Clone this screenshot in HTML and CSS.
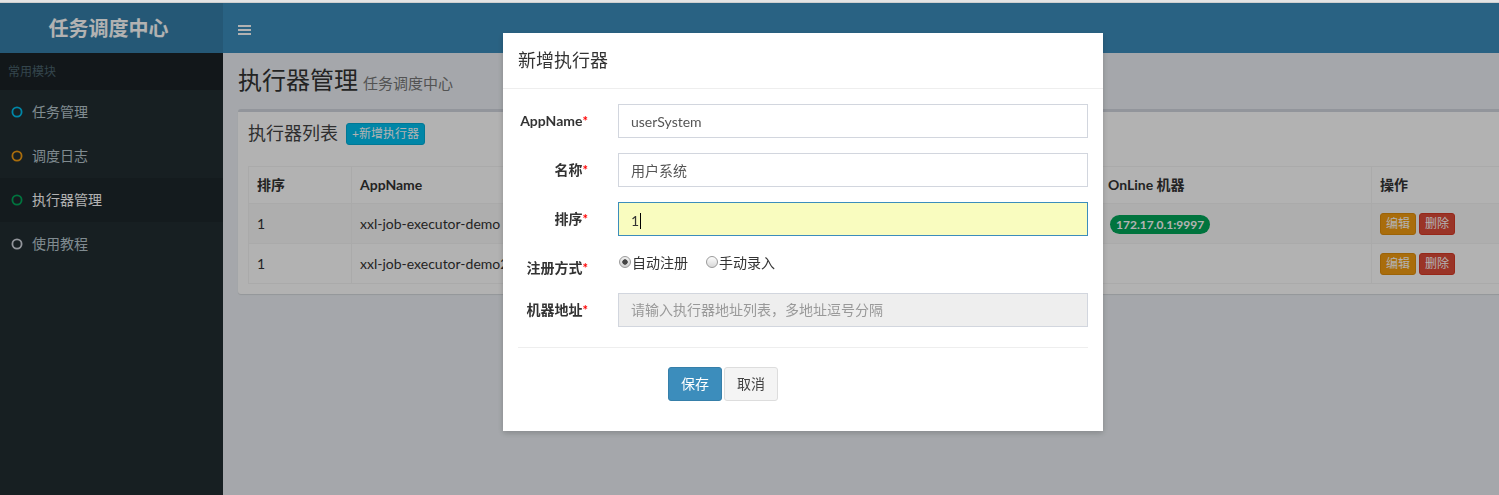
FILE: index.html
```html
<!DOCTYPE html>
<html lang="zh-CN">
<head>
<meta charset="utf-8">
<title>执行器管理</title>
<link rel="stylesheet" href="styles.css">
</head>
<body>
<div class="topline"></div>
<div class="wrapper">
  <header class="main-header">
    <div class="logo">任务调度中心</div>
    <nav class="navbar">
      <span class="toggle"><i></i><i></i><i></i></span>
    </nav>
  </header>
  <div class="layout">
    <aside class="sidebar">
      <div class="menu-header">常用模块</div>
      <ul class="menu">
        <li><svg class="ico" viewBox="0 0 12 12"><circle cx="6" cy="6" r="4.6" stroke="#00c0ef"/></svg>任务管理</li>
        <li><svg class="ico" viewBox="0 0 12 12"><circle cx="6" cy="6" r="4.6" stroke="#f39c12"/></svg>调度日志</li>
        <li class="active"><svg class="ico" viewBox="0 0 12 12"><circle cx="6" cy="6" r="4.6" stroke="#00a65a"/></svg>执行器管理</li>
        <li><svg class="ico" viewBox="0 0 12 12"><circle cx="6" cy="6" r="4.6" stroke="#d2d6de"/></svg>使用教程</li>
      </ul>
    </aside>
    <main class="content-wrapper">
      <section class="content-header">
        <h1>执行器管理<small>任务调度中心</small></h1>
      </section>
      <section class="content">
        <div class="box">
          <div class="box-header">
            <h3>执行器列表</h3>
            <button class="btn btn-xs btn-info">+新增执行器</button>
          </div>
          <div class="box-body">
            <table class="table">
              <colgroup>
                <col class="c-order"><col class="c-app"><col class="c-name"><col class="c-type"><col class="c-online"><col>
              </colgroup>
              <thead>
                <tr><th>排序</th><th>AppName</th><th>名称</th><th>注册方式</th><th>OnLine 机器</th><th>操作</th></tr>
              </thead>
              <tbody>
                <tr>
                  <td>1</td><td>xxl-job-executor-demo</td><td>示例执行器</td><td>自动注册</td>
                  <td><span class="badge">172.17.0.1:9997</span></td>
                  <td><span class="ops"><button class="btn btn-xs btn-warning">编辑</button><button class="btn btn-xs btn-danger">删除</button></span></td>
                </tr>
                <tr>
                  <td>1</td><td>xxl-job-executor-demo2</td><td>示例执行器2</td><td>自动注册</td>
                  <td></td>
                  <td><span class="ops"><button class="btn btn-xs btn-warning">编辑</button><button class="btn btn-xs btn-danger">删除</button></span></td>
                </tr>
              </tbody>
            </table>
          </div>
        </div>
      </section>
    </main>
  </div>
</div>

<div class="backdrop"></div>

<div class="modal">
  <div class="modal-header"><h4>新增执行器</h4></div>
  <div class="modal-body">
    <form class="form">
      <div class="form-group">
        <label class="ctl-label">AppName<span class="req">*</span></label>
        <div class="ctl"><input class="form-control" type="text" value="userSystem"></div>
      </div>
      <div class="form-group">
        <label class="ctl-label">名称<span class="req">*</span></label>
        <div class="ctl"><input class="form-control" type="text" value="用户系统"></div>
      </div>
      <div class="form-group">
        <label class="ctl-label">排序<span class="req">*</span></label>
        <div class="ctl"><div class="form-control focused"><span class="typed">1</span></div></div>
      </div>
      <div class="form-group">
        <label class="ctl-label">注册方式<span class="req">*</span></label>
        <div class="ctl radios">
          <label class="radio-inline"><input type="radio" name="addressType" checked><span>自动注册</span></label>
          <label class="radio-inline"><input type="radio" name="addressType"><span>手动录入</span></label>
        </div>
      </div>
      <div class="form-group">
        <label class="ctl-label">机器地址<span class="req">*</span></label>
        <div class="ctl"><input class="form-control" type="text" placeholder="请输入执行器地址列表，多地址逗号分隔" disabled></div>
      </div>
      <hr>
      <div class="form-group actions">
        <button type="button" class="btn btn-primary">保存</button>
        <button type="button" class="btn btn-default">取消</button>
      </div>
    </form>
  </div>
</div>
</body>
</html>
```

FILE: styles.css
```css
* { box-sizing: border-box; }

html, body {
  margin: 0;
  padding: 0;
  height: 100%;
}

body {
  overflow: hidden;
  font-family: "Lato", "Noto Sans CJK SC", sans-serif;
  font-size: 14px;
  line-height: 1.42857;
  color: #333;
  background: #ecf0f5;
}

.topline {
  height: 3px;
  background: #e4e4e4;
  border-bottom: 1px solid #cfcfcf;
  position: relative;
  z-index: 20;
}

.wrapper {
  width: 1530px;
  height: calc(100% - 3px);
  display: flex;
  flex-direction: column;
}

/* header */
.main-header {
  display: flex;
  height: 50px;
  flex: none;
}

.logo {
  width: 223px;
  background: #367fa9;
  color: #fff;
  font-size: 20px;
  font-weight: 700;
  line-height: 50px;
  text-align: center;
  padding-right: 6px;
}

.navbar {
  flex: 1;
  background: #3c8dbc;
  display: flex;
  align-items: center;
  padding-left: 15px;
}

.toggle {
  display: flex;
  flex-direction: column;
  gap: 2px;
  width: 13px;
  margin-top: 3px;
}

.toggle i {
  display: block;
  height: 2px;
  background: #fff;
}

/* layout */
.layout {
  flex: 1;
  display: flex;
}

.sidebar {
  width: 223px;
  flex: none;
  background: #222d32;
}

.menu-header {
  background: #1a2226;
  color: #4b646f;
  font-size: 12px;
  height: 37px;
  line-height: 37px;
  padding-left: 8px;
}

.menu {
  list-style: none;
  margin: 0;
  padding: 0;
}

.menu li {
  height: 44px;
  display: flex;
  align-items: center;
  padding-left: 11px;
  padding-bottom: 1px;
  color: #b8c7ce;
  font-size: 14px;
}

.menu li.active {
  background: #1e282c;
  color: #fff;
}

.ico {
  width: 12px;
  height: 12px;
  margin-right: 9px;
  fill: none;
  stroke-width: 1.8;
}

.content-wrapper {
  flex: 1;
  background: #ecf0f5;
}

.content-header {
  padding: 15px 15px 0;
}

.content-header h1 {
  margin: 0;
  height: 26px;
  display: flex;
  align-items: baseline;
  font-size: 24px;
  font-weight: 400;
  line-height: 24px;
}

.content-header small {
  font-size: 15px;
  line-height: 15px;
  color: #777;
  margin-left: 5px;
}

.content {
  padding: 15px;
}

.box {
  background: #fff;
  border-top: 3px solid #d2d6de;
  border-radius: 3px;
  box-shadow: 0 1px 1px rgba(0, 0, 0, 0.1);
}

.box-header {
  height: 44px;
  padding: 0 10px 3px;
  display: flex;
  align-items: center;
  gap: 8px;
}

.box-header h3 {
  margin: 0;
  font-size: 18px;
  font-weight: 400;
  line-height: 20px;
  color: #444;
}

.box-header .btn {
  margin-top: 2px;
}

.box-body {
  padding: 10px;
}

.btn {
  font-family: inherit;
  display: inline-block;
  border: 1px solid transparent;
  border-radius: 3px;
  font-size: 14px;
  line-height: 20px;
  padding: 6px 12px;
  cursor: pointer;
}

.btn-xs {
  font-size: 12px;
  line-height: 18px;
  padding: 1px 5px;
  color: #fff;
}

.btn-info { background: #00c0ef; border-color: #00acd6; }
.btn-warning { background: #f39c12; border-color: #e08e0b; }
.btn-danger { background: #dd4b39; border-color: #d73925; }
.btn-primary { background: #3c8dbc; border-color: #367fa9; color: #fff; }
.btn-default { background: #f4f4f4; border-color: #ddd; color: #444; }

.table {
  width: 100%;
  border-collapse: collapse;
  table-layout: fixed;
  border: 1px solid #f4f4f4;
}

.c-order { width: 103px; }
.c-app { width: 248px; }
.c-name { width: 250px; }
.c-type { width: 250px; }
.c-online { width: 272px; }

.table th,
.table td {
  border: 1px solid #f4f4f4;
  padding: 0 8px;
  text-align: left;
  vertical-align: middle;
  white-space: nowrap;
  overflow: hidden;
}

.table th {
  height: 37px;
  font-weight: 700;
}

.table td {
  height: 40px;
}

.table tbody tr:nth-child(odd) {
  background: #f9f9f9;
}

.badge {
  display: inline-block;
  background: #00a65a;
  color: #fff;
  font-size: 12px;
  font-weight: 700;
  line-height: 13px;
  padding: 3px 6px;
  border-radius: 10px;
  margin-left: 2px;
}

.ops {
  display: inline-flex;
  gap: 3px;
}

/* overlay */
.backdrop {
  position: fixed;
  left: 0;
  right: 0;
  top: 3px;
  bottom: 0;
  background: rgba(0, 0, 0, 0.3);
  z-index: 10;
}

.modal {
  position: fixed;
  left: 503px;
  top: 33px;
  width: 600px;
  background: #fff;
  box-shadow: 0 2px 6px rgba(0, 0, 0, 0.2);
  z-index: 11;
}

.modal-header {
  padding: 15px;
  border-bottom: 1px solid #eeeeee;
}

.modal-header h4 {
  margin: 0;
  font-size: 18px;
  font-weight: 400;
  line-height: 25px;
  color: #333;
}

.modal-body {
  padding: 15px;
}

.form {
  margin: 0;
}

.form-group {
  display: flex;
  margin: 0 -15px 15px;
}

.ctl-label {
  width: 100px;
  flex: none;
  padding: 7px 15px 0;
  text-align: right;
  font-weight: 700;
  color: #333;
}

.req {
  color: #f00;
  font-size: 13px;
}

.ctl {
  flex: 1;
  padding: 0 15px;
}

.form-control {
  display: block;
  width: 100%;
  height: 34px;
  padding: 6px 12px;
  font-family: inherit;
  font-size: 14px;
  line-height: 20px;
  color: #555;
  background: #fff;
  border: 1px solid #d2d6de;
  border-radius: 0;
  outline: none;
}

.form-control:disabled {
  background: #eee;
}

.form-control::placeholder {
  color: #999;
}

.form-control.focused {
  border-color: #3c8dbc;
  background: #f9fcbf;
  color: #333;
}

.typed {
  display: inline-block;
  line-height: 16px;
  padding-right: 1px;
  border-right: 1px solid #000;
  vertical-align: -2px;
}

.radios {
  padding-top: 2px;
  display: flex;
  align-items: flex-start;
  gap: 17px;
}

.radio-inline {
  display: inline-flex;
  align-items: center;
  color: #333;
  line-height: 20px;
  margin-left: 1px;
}

.radio-inline input {
  -webkit-appearance: none;
  appearance: none;
  flex: none;
  width: 12px;
  height: 12px;
  margin: 0 1px 3px 0;
  border-radius: 50%;
  border: 1px solid #9a9a9a;
  background: linear-gradient(#fdfdfd, #d8d8d8);
}

.radio-inline input:checked {
  background: radial-gradient(circle, #444 0 2.4px, transparent 3px), linear-gradient(#f0f0f0, #cfcfcf);
}

hr {
  border: 0;
  border-top: 1px solid #eee;
  margin: 20px 0 19px;
}

.actions {
  padding-left: 165px;
  gap: 2px;
}
```
